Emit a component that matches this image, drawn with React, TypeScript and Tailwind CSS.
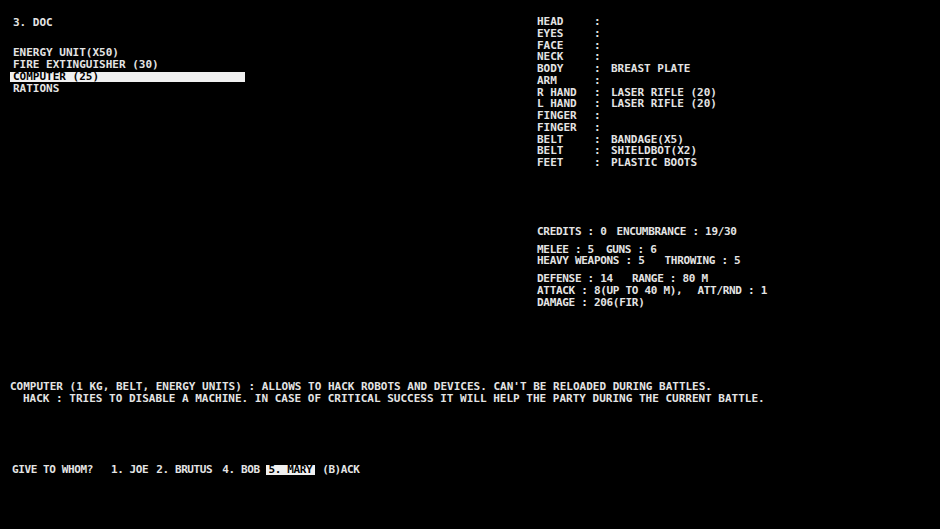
import React from "react";

const font = { fontFamily: '"DejaVu Sans Mono", "Liberation Mono", monospace' };

const equip: [string, string][] = [
  ["HEAD", ""],
  ["EYES", ""],
  ["FACE", ""],
  ["NECK", ""],
  ["BODY", "BREAST PLATE"],
  ["ARM", ""],
  ["R HAND", "LASER RIFLE (20)"],
  ["L HAND", "LASER RIFLE (20)"],
  ["FINGER", ""],
  ["FINGER", ""],
  ["BELT", "BANDAGE(X5)"],
  ["BELT", "SHIELDBOT(X2)"],
  ["FEET", "PLASTIC BOOTS"],
];

export default function App() {
  return (
    <div
      className="w-[940px] h-[529px] bg-black text-[#e4e4e4] text-[11px] font-bold uppercase overflow-hidden whitespace-pre"
      style={font}
    >
      <div className="flex pt-[16px]">
        <div className="w-[537px] shrink-0 pl-[13px] leading-[12px]">
          <div className="pt-[1px]">3. DOC</div>
          <div className="mt-[18px]">
            <div className="h-[12px]">ENERGY UNIT(X50)</div>
            <div className="h-[12px]">FIRE EXTINGUISHER (30)</div>
            <div className="h-[12px] pt-[1px]">
              <div className="-ml-[3px] pl-[3px] w-[235px] h-[10px] leading-[10px] bg-[#f0f0f0] text-black">
                COMPUTER (25)
              </div>
            </div>
            <div className="h-[12px]">RATIONS</div>
          </div>
        </div>
        <div className="flex flex-col leading-[11.75px]">
          <div className="grid grid-cols-[57px_17px_auto]">
            {equip.map(([k, v], i) => (
              <React.Fragment key={i}>
                <div className="h-[11.75px]">{k}</div>
                <div className="h-[11.75px]">:</div>
                <div className="h-[11.75px]">{v}</div>
              </React.Fragment>
            ))}
          </div>
          <div className="mt-[57px] flex flex-col gap-[6px] tracking-[-0.3px]">
            <div className="flex">
              <span>CREDITS : 0</span>
              <span className="ml-[10px]">ENCUMBRANCE : 19/30</span>
            </div>
            <div className="flex flex-col">
              <div className="flex">
                <span>MELEE : 5</span>
                <span className="ml-[12px]">GUNS : 6</span>
              </div>
              <div className="flex">
                <span>HEAVY WEAPONS : 5</span>
                <span className="ml-[20px]">THROWING : 5</span>
              </div>
            </div>
            <div className="flex flex-col">
              <div className="flex">
                <span>DEFENSE : 14</span>
                <span className="ml-[19px]">RANGE : 80 M</span>
              </div>
              <div className="flex">
                <span>ATTACK : 8(UP TO 40 M),</span>
                <span className="ml-[15px]">ATT/RND : 1</span>
              </div>
              <div>DAMAGE : 206(FIR)</div>
            </div>
          </div>
        </div>
      </div>
      <div className="mt-[73px] pl-[10px] leading-[11.75px]">
        <div>COMPUTER (1 KG, BELT, ENERGY UNITS) : ALLOWS TO HACK ROBOTS AND DEVICES. CAN'T BE RELOADED DURING BATTLES.</div>
        <div className="pl-[13px]">HACK : TRIES TO DISABLE A MACHINE. IN CASE OF CRITICAL SUCCESS IT WILL HELP THE PARTY DURING THE CURRENT BATTLE.</div>
      </div>
      <div className="mt-[59px] pl-[12px] flex items-center h-[12px] leading-[12px] tracking-[-0.4px]">
        <span>GIVE TO WHOM?</span>
        <span className="ml-[18px]">1. JOE</span>
        <span className="ml-[8px]">2. BRUTUS</span>
        <span className="ml-[10px]">4. BOB</span>
        <span className="ml-[6px] px-[3px] h-[10px] leading-[10px] bg-[#f0f0f0] text-black">5. MARY</span>
        <span className="ml-[7px]">(B)ACK</span>
      </div>
    </div>
  );
}
